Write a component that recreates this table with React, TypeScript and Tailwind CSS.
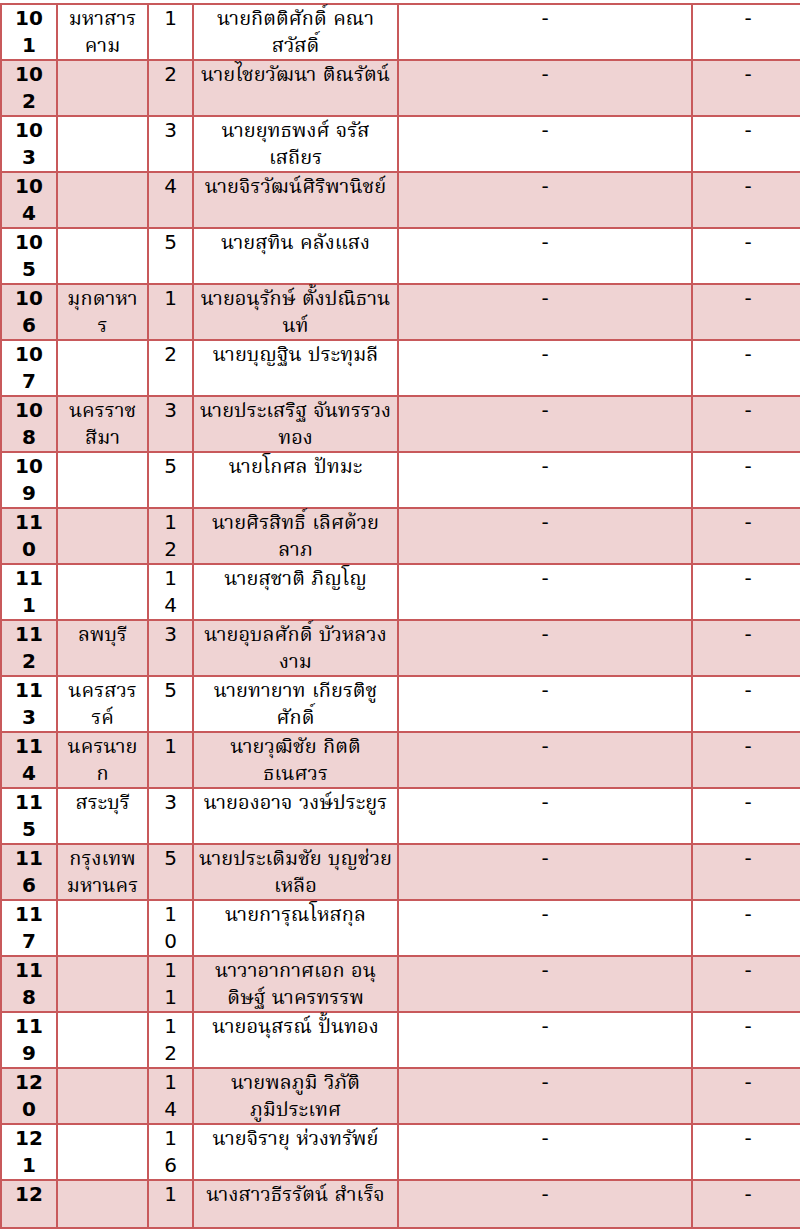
const rows: { no: string[]; prov: string[]; seat: string[]; name: string[] }[] = [
  { no: ["10", "1"], prov: ["มหาสาร", "คาม"], seat: ["1"], name: ["นายกิตติศักดิ์ คณา", "สวัสดิ์"] },
  { no: ["10", "2"], prov: [], seat: ["2"], name: ["นายไชยวัฒนา ติณรัตน์"] },
  { no: ["10", "3"], prov: [], seat: ["3"], name: ["นายยุทธพงศ์ จรัส", "เสถียร"] },
  { no: ["10", "4"], prov: [], seat: ["4"], name: ["นายจิรวัฒน์ศิริพานิชย์"] },
  { no: ["10", "5"], prov: [], seat: ["5"], name: ["นายสุทิน คลังแสง"] },
  { no: ["10", "6"], prov: ["มุกดาหา", "ร"], seat: ["1"], name: ["นายอนุรักษ์ ตั้งปณิธาน", "นท์"] },
  { no: ["10", "7"], prov: [], seat: ["2"], name: ["นายบุญฐิน ประทุมลี"] },
  { no: ["10", "8"], prov: ["นครราช", "สีมา"], seat: ["3"], name: ["นายประเสริฐ จันทรรวง", "ทอง"] },
  { no: ["10", "9"], prov: [], seat: ["5"], name: ["นายโกศล ปัทมะ"] },
  { no: ["11", "0"], prov: [], seat: ["1", "2"], name: ["นายศิรสิทธิ์ เลิศด้วย", "ลาภ"] },
  { no: ["11", "1"], prov: [], seat: ["1", "4"], name: ["นายสุชาติ ภิญโญ"] },
  { no: ["11", "2"], prov: ["ลพบุรี"], seat: ["3"], name: ["นายอุบลศักดิ์ บัวหลวง", "งาม"] },
  { no: ["11", "3"], prov: ["นครสวร", "รค์"], seat: ["5"], name: ["นายทายาท เกียรติชู", "ศักดิ์"] },
  { no: ["11", "4"], prov: ["นครนาย", "ก"], seat: ["1"], name: ["นายวุฒิชัย กิตติ", "ธเนศวร"] },
  { no: ["11", "5"], prov: ["สระบุรี"], seat: ["3"], name: ["นายองอาจ วงษ์ประยูร"] },
  { no: ["11", "6"], prov: ["กรุงเทพ", "มหานคร"], seat: ["5"], name: ["นายประเดิมชัย บุญช่วย", "เหลือ"] },
  { no: ["11", "7"], prov: [], seat: ["1", "0"], name: ["นายการุณโหสกุล"] },
  { no: ["11", "8"], prov: [], seat: ["1", "1"], name: ["นาวาอากาศเอก อนุ", "ดิษฐ์ นาครทรรพ"] },
  { no: ["11", "9"], prov: [], seat: ["1", "2"], name: ["นายอนุสรณ์ ปั้นทอง"] },
  { no: ["12", "0"], prov: [], seat: ["1", "4"], name: ["นายพลภูมิ วิภัติ", "ภูมิประเทศ"] },
  { no: ["12", "1"], prov: [], seat: ["1", "6"], name: ["นายจิรายุ ห่วงทรัพย์"] },
  { no: ["12"], prov: [], seat: ["1"], name: ["นางสาวธีรรัตน์ สำเร็จ"] },
];

function Lines({ lines }: { lines: string[] }) {
  return (
    <>
      {lines.map((l, i) => (
        <div key={i} className="whitespace-nowrap">
          {l}
        </div>
      ))}
    </>
  );
}

export default function App() {
  return (
    <div className="w-[800px] overflow-hidden bg-white pt-[3px] text-[20px] leading-[27px] text-black [font-family:'DejaVu_Sans','Noto_Serif_Thai','Noto_Sans_Thai_Looped','Loma','Garuda','Norasi',serif]">
      <div className="w-[807px] border-t-2 border-l-2 border-[#c8595b]">
        {rows.map((r, i) => {
          const last = i === rows.length - 1;
          return (
            <div
              key={i}
              className={`grid grid-cols-[56px_91px_45px_205px_294px_112px] text-center ${
                i % 2 === 1 ? "bg-[#efd3d3]" : "bg-white"
              } ${last ? "h-[48px]" : "h-[56px]"}`}
            >
              <div className="border-r-2 border-b-2 border-[#c8595b] font-bold">
                <Lines lines={r.no} />
              </div>
              <div className="border-r-2 border-b-2 border-[#c8595b]">
                <Lines lines={r.prov} />
              </div>
              <div className="border-r-2 border-b-2 border-[#c8595b]">
                <Lines lines={r.seat} />
              </div>
              <div className="border-r-2 border-b-2 border-[#c8595b]">
                <Lines lines={r.name} />
              </div>
              <div className="border-r-2 border-b-2 border-[#c8595b]">-</div>
              <div className="border-r-2 border-b-2 border-[#c8595b]">-</div>
            </div>
          );
        })}
      </div>
    </div>
  );
}
